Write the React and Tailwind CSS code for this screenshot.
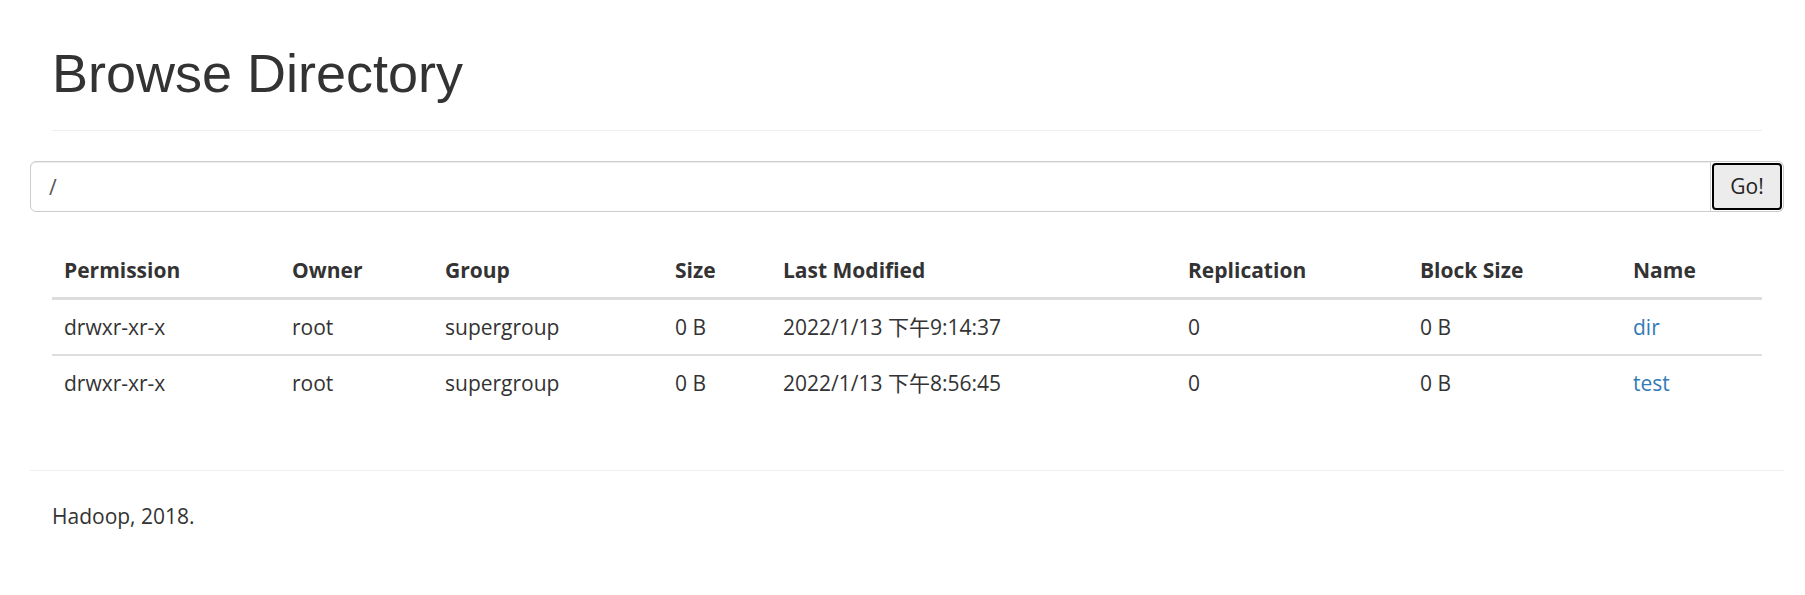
const FILES = [
  { perm: 'drwxr-xr-x', owner: 'root', group: 'supergroup', size: '0 B', modified: '2022/1/13 下午9:14:37', repl: '0', block: '0 B', name: 'dir' },
  { perm: 'drwxr-xr-x', owner: 'root', group: 'supergroup', size: '0 B', modified: '2022/1/13 下午8:56:45', repl: '0', block: '0 B', name: 'test' },
];

const COLUMNS = [
  { label: 'Permission', w: 'w-[228px]' },
  { label: 'Owner', w: 'w-[153px]' },
  { label: 'Group', w: 'w-[230px]' },
  { label: 'Size', w: 'w-[108px]' },
  { label: 'Last Modified', w: 'w-[405px]' },
  { label: 'Replication', w: 'w-[232px]' },
  { label: 'Block Size', w: 'w-[213px]' },
  { label: 'Name', w: 'w-[141px]' },
];

const BODY_FONT = 'font-["Open_Sans","Noto_Sans_CJK_SC",sans-serif]';

export default function App() {
  return (
    <div className={`min-h-[595px] bg-white text-[#333] ${BODY_FONT}`}>
      <div className="ml-[30px] w-[1754px]">
        {/* page header */}
        <div className="px-[22px] pt-[43px]">
          <h1 className='border-b border-[#eee] pb-[27px] font-["Liberation_Sans",Arial,sans-serif] text-[54px] leading-[60px] font-normal text-[#333]'>
            Browse Directory
          </h1>
        </div>

        {/* path bar */}
        <div className="mt-[30px] flex h-[51px]">
          <input
            type="text"
            defaultValue="/"
            className="h-full flex-1 rounded-l-[6px] border border-[#ccc] px-[18px] text-[21px] text-[#555] shadow-[inset_0_1px_1px_rgba(0,0,0,0.075)] outline-none"
          />
          <span className="flex h-full w-[73px] rounded-r-[6px] border border-l-0 border-[#ccc] p-[1px]">
            <button
              type="button"
              className="flex-1 rounded-[4px] border-2 border-black bg-[#ececec] text-[21px] leading-none text-[#222]"
            >
              Go!
            </button>
          </span>
        </div>

        {/* listing */}
        <div className="mt-[31px] px-[22px]">
          <table className="w-full table-fixed border-collapse text-[21px] leading-[30px]">
            <thead>
              <tr>
                {COLUMNS.map(c => (
                  <th key={c.label} className={`${c.w} border-b-[3px] border-[#ddd] p-[12px] text-left font-bold`}>
                    {c.label}
                  </th>
                ))}
              </tr>
            </thead>
            <tbody>
              {FILES.map((f, i) => (
                <tr key={f.name} className={i > 0 ? 'border-t-2 border-[#ddd]' : ''}>
                  <td className="p-[12px]">{f.perm}</td>
                  <td className="p-[12px]">{f.owner}</td>
                  <td className="p-[12px]">{f.group}</td>
                  <td className="p-[12px]">{f.size}</td>
                  <td className="p-[12px] whitespace-nowrap">{f.modified}</td>
                  <td className="p-[12px]">{f.repl}</td>
                  <td className="p-[12px]">{f.block}</td>
                  <td className="p-[12px]">
                    <a href="#" className="text-[#337ab7]">{f.name}</a>
                  </td>
                </tr>
              ))}
            </tbody>
          </table>
        </div>

        {/* footer */}
        <div className="mt-[60px] border-t border-[#eee] pt-[30px]">
          <p className="px-[22px] text-[21px] leading-[30px]">Hadoop, 2018.</p>
        </div>
      </div>
    </div>
  );
}
